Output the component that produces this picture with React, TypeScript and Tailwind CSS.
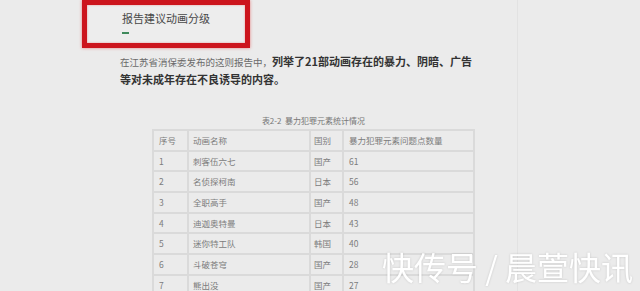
const rows = [
  { no: '1', name: '刺客伍六七', country: '国产', count: '61' },
  { no: '2', name: '名侦探柯南', country: '日本', count: '56' },
  { no: '3', name: '全职高手', country: '国产', count: '48' },
  { no: '4', name: '迪迦奥特曼', country: '日本', count: '43' },
  { no: '5', name: '迷你特工队', country: '韩国', count: '40' },
  { no: '6', name: '斗破苍穹', country: '国产', count: '28' },
  { no: '7', name: '熊出没', country: '国产', count: '27' },
];

const cell = 'border-2 border-[#dadada] text-left align-middle font-normal';

export default function App() {
  return (
    <div
      className="relative flex w-[640px] h-[291px] overflow-hidden bg-[#ebebeb]"
      style={{ fontFamily: '"Noto Sans CJK SC", "Noto Sans", sans-serif' }}
    >
      <div className="w-[518px] shrink-0 border-r border-[#e2e2e2]">
        <div className="ml-[82px] w-[168px] h-[48px] border-[5px] border-[#cc151d] bg-[#ededed] pl-[35px] pt-[6px] shadow-[0_0_3px_rgba(230,60,60,0.6),inset_0_0_2px_rgba(230,80,80,0.6)]">
          <div className="text-[11px] leading-[14px] text-[#484848]">报告建议动画分级</div>
          <div className="mt-[7px] w-[7px] h-[1.5px] bg-[#3f8a5c]" />
        </div>

        <p className="ml-[120px] mt-[5px] w-[370px] text-[11px] leading-[17px] text-[#333]">
          <span className="text-[9.5px] text-[#6a6a6a]">在江苏省消保委发布的这则报告中，</span>
          <span className="font-bold">列举了21部动画存在的暴力、阴暗、广告</span>
          <br />
          <span className="font-bold">等对未成年存在不良诱导的内容。</span>
        </p>

        <div className="ml-[152px] w-[323px] mt-[28px] text-center text-[8px] leading-[10px] text-[#777]">
          表2-2&nbsp;&nbsp;暴力犯罪元素统计情况
        </div>

        <table className="ml-[152px] mt-[3px] w-[323px] border-collapse table-fixed text-[8.5px] text-[#7c7c7c]">
          <colgroup>
            <col className="w-[35px]" />
            <col className="w-[122px]" />
            <col className="w-[33px]" />
            <col />
          </colgroup>
          <thead>
            <tr className="h-[20.7px]">
              <th className={`${cell} pl-[5px]`}>序号</th>
              <th className={`${cell} pl-[4px]`}>动画名称</th>
              <th className={`${cell} pl-[3px]`}>国别</th>
              <th className={`${cell} pl-[5px]`}>暴力犯罪元素问题点数量</th>
            </tr>
          </thead>
          <tbody>
            {rows.map((r) => (
              <tr key={r.no} className="h-[20.7px]">
                <td className={`${cell} pl-[5px]`}>{r.no}</td>
                <td className={`${cell} pl-[4px]`}>{r.name}</td>
                <td className={`${cell} pl-[3px]`}>{r.country}</td>
                <td className={`${cell} pl-[5px]`}>{r.count}</td>
              </tr>
            ))}
          </tbody>
        </table>
      </div>
      <div className="flex-1" />

      <div className="absolute left-[382px] top-[250px] whitespace-nowrap text-[32px] leading-none text-white drop-shadow-[0_0_1px_rgba(0,0,0,0.15)]">
        快传号 / 晨萱快讯
      </div>
    </div>
  );
}
